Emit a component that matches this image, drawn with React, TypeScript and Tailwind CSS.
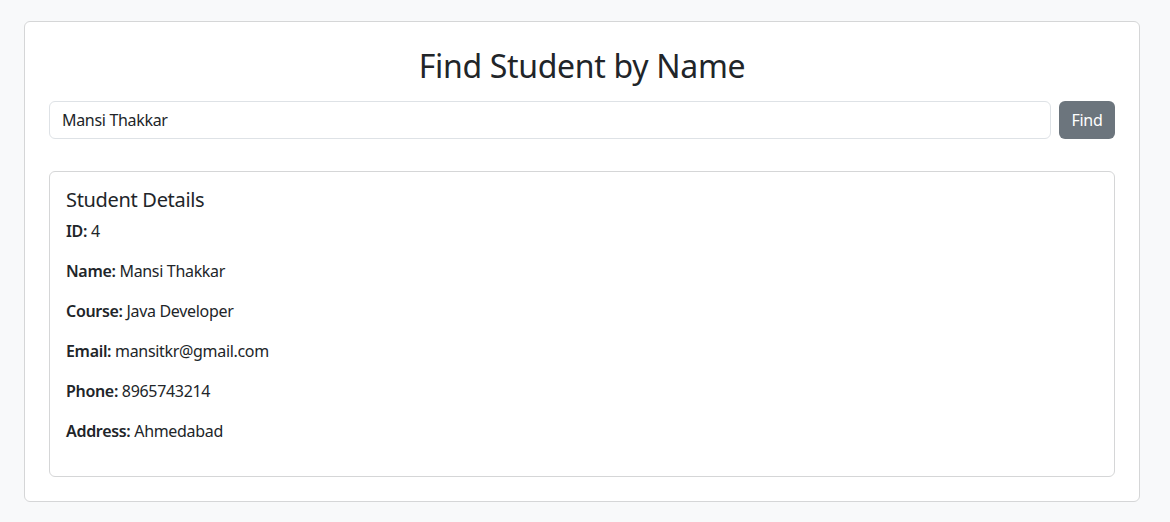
export default function App() {
  const rows: [string, string][] = [
    ["ID:", "4"],
    ["Name:", "Mansi Thakkar"],
    ["Course:", "Java Developer"],
    ["Email:", "mansitkr@gmail.com"],
    ["Phone:", "8965743214"],
    ["Address:", "Ahmedabad"],
  ];

  return (
    <div
      className="min-h-[522px] bg-[#f8f9fa] pt-[21px] pb-[20px] pl-[24px] text-[#212529] tracking-[-0.02em]"
      style={{ fontFamily: '"Noto Sans", "Open Sans", sans-serif' }}
    >
      <div className="w-[1116px] rounded-[6px] border border-[#d5d6d7] bg-white p-[24px]">
        <h2 className="mb-[16px] text-center text-[32px] leading-[39px] font-normal">
          Find Student by Name
        </h2>

        {/* Search row */}
        <div className="flex gap-[8px]">
          <input
            className="h-[38px] flex-1 rounded-[6px] border border-[#dee2e6] px-[12px] text-[16px] tracking-[-0.02em] text-[#212529] outline-none"
            defaultValue="Mansi Thakkar"
          />
          <button className="h-[38px] w-[56px] rounded-[6px] bg-[#6c757d] text-[16px] text-white">
            Find
          </button>
        </div>

        {/* Details card */}
        <div className="mt-[32px] rounded-[6px] border border-[#d5d6d7] px-[16px] pt-[16px] pb-[17px]">
          <h5 className="mb-[7px] text-[20px] leading-[24px] font-normal">
            Student Details
          </h5>
          {rows.map(([label, value]) => (
            <p key={label} className="mb-[16px] text-[16px] leading-[24px]">
              <strong className="font-semibold">{label}</strong> {value}
            </p>
          ))}
        </div>
      </div>
    </div>
  );
}
